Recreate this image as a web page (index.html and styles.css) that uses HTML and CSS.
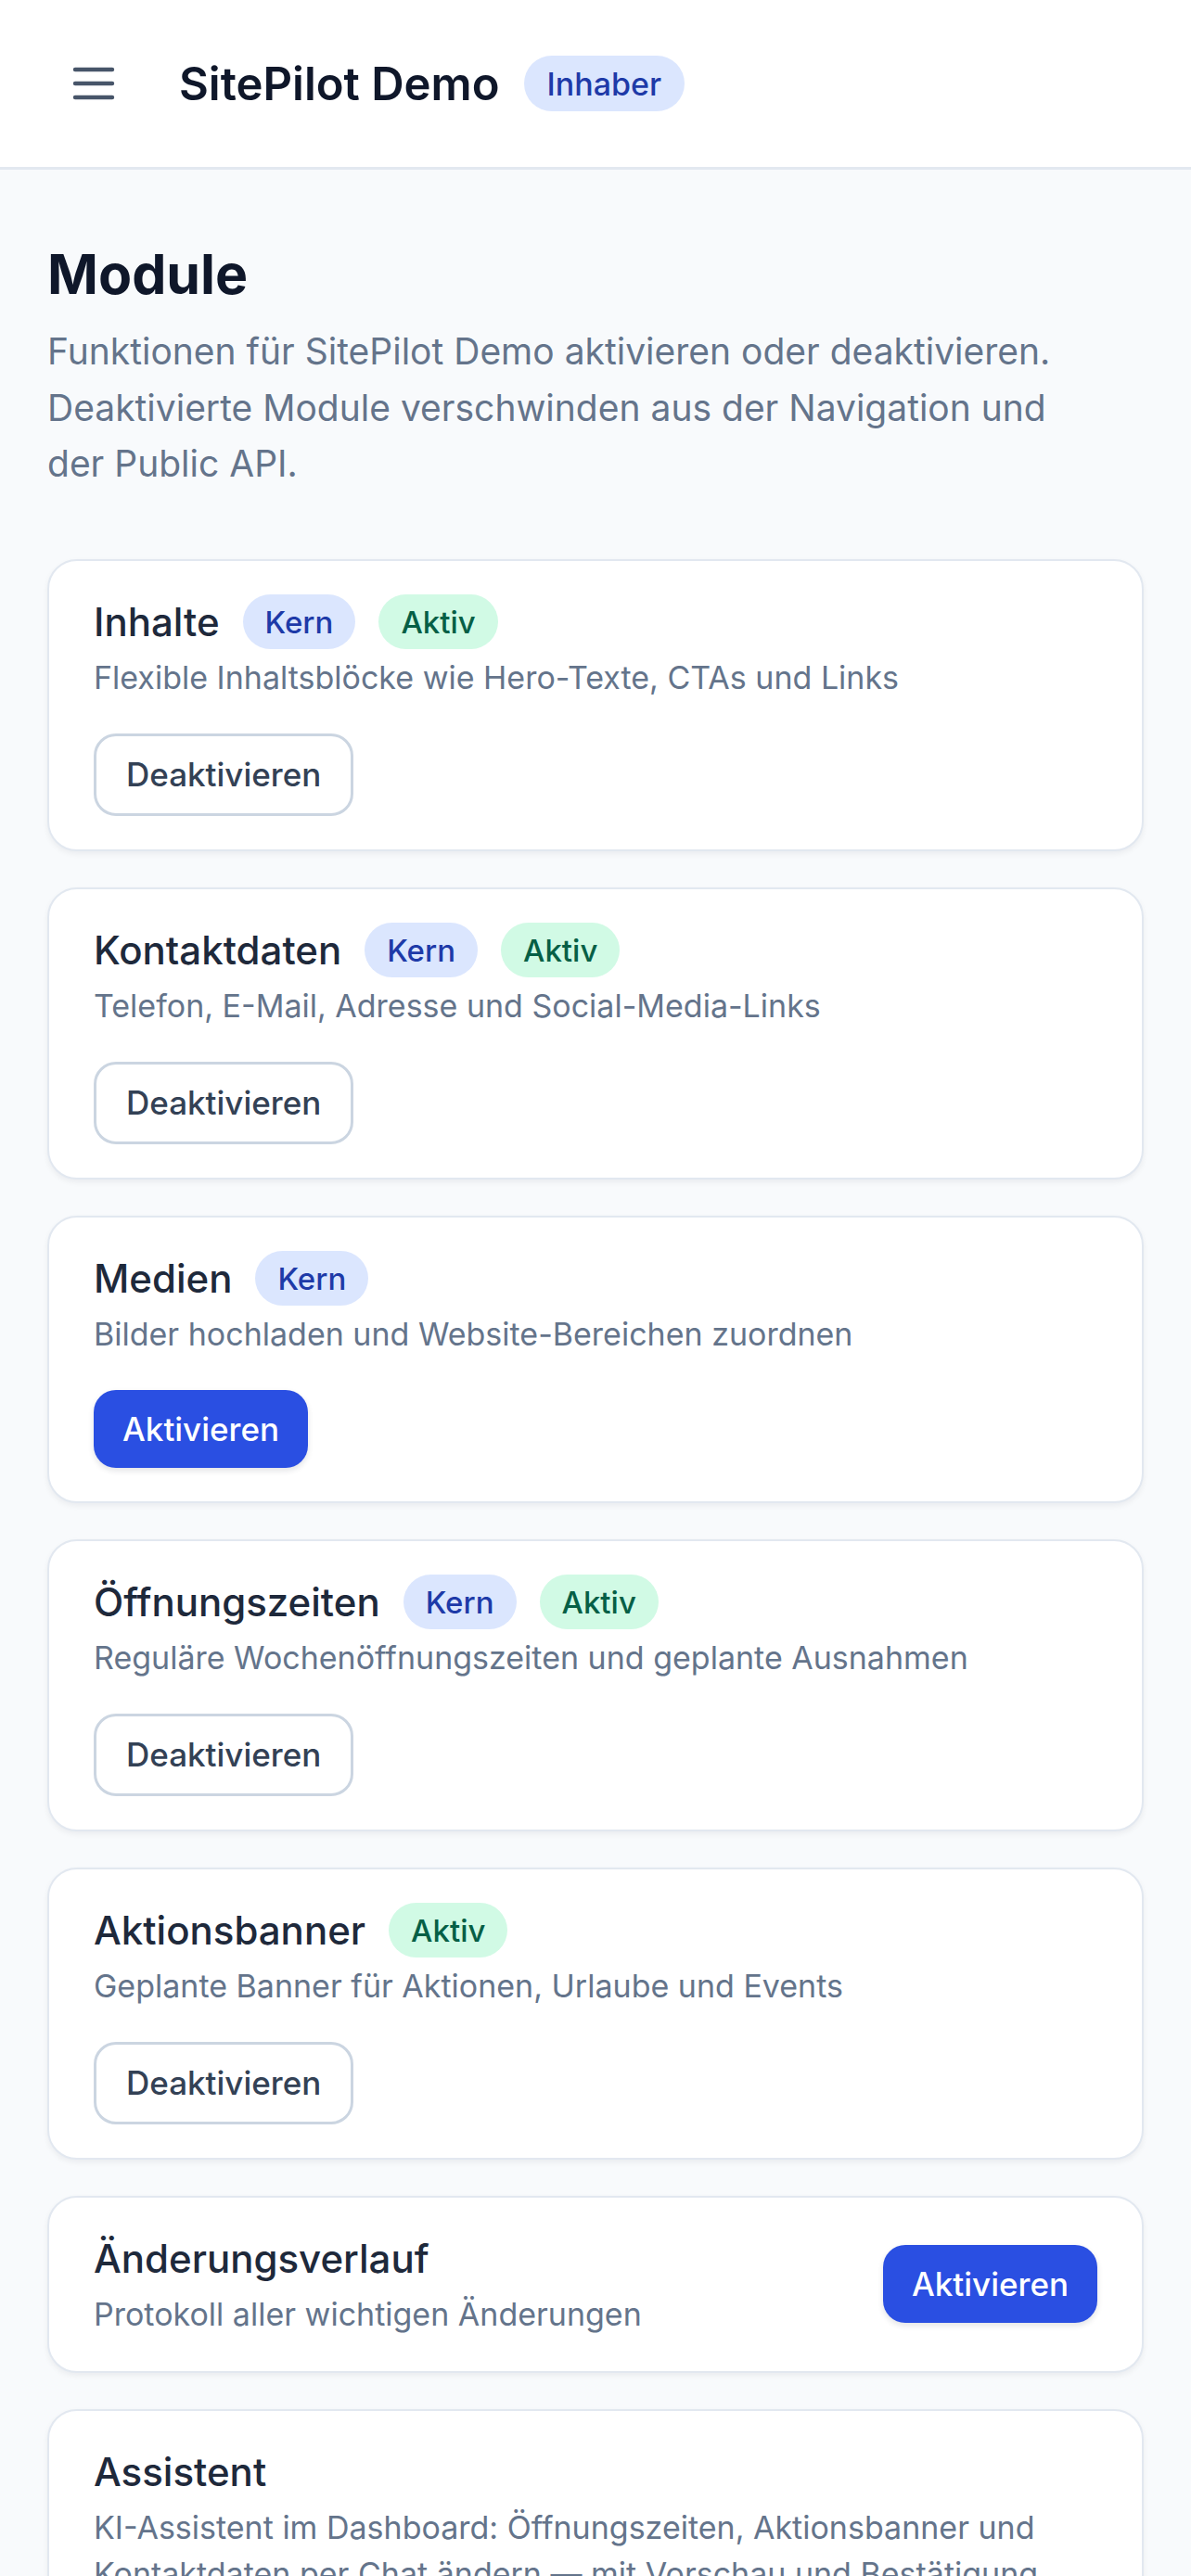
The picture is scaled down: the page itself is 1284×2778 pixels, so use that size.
FILE: index.html
```html
<!DOCTYPE html>
<html lang="de">
<head>
    <meta charset="UTF-8">
    <meta name="viewport" content="width=device-width, initial-scale=1.0">
    <title>Module – SitePilot Demo</title>
    <link rel="stylesheet" href="styles.css">
</head>
<body>
    <header class="topbar">
        <button class="menu-btn" aria-label="Menü">
            <svg viewBox="0 0 24 24" width="60" height="60" fill="none" stroke="currentColor" stroke-width="1.75" stroke-linecap="round">
                <line x1="4" y1="6" x2="20" y2="6"/>
                <line x1="4" y1="12" x2="20" y2="12"/>
                <line x1="4" y1="18" x2="20" y2="18"/>
            </svg>
        </button>
        <div class="site">
            <span class="site-name">SitePilot Demo</span>
            <span class="badge badge-blue">Inhaber</span>
        </div>
    </header>

    <main class="page">
        <h1>Module</h1>
        <p class="intro">Funktionen für SitePilot Demo aktivieren oder deaktivieren. Deaktivierte Module verschwinden aus der Navigation und<br>der Public API.</p>

        <div class="module-list">
            <div class="module">
                <div class="module-head">
                    <span class="module-title">Inhalte</span>
                    <span class="badge badge-blue">Kern</span>
                    <span class="badge badge-green">Aktiv</span>
                </div>
                <p class="module-desc">Flexible Inhaltsblöcke wie Hero-Texte, CTAs und Links</p>
                <div class="module-actions">
                    <button class="btn btn-outline">Deaktivieren</button>
                </div>
            </div>

            <div class="module">
                <div class="module-head">
                    <span class="module-title">Kontaktdaten</span>
                    <span class="badge badge-blue">Kern</span>
                    <span class="badge badge-green">Aktiv</span>
                </div>
                <p class="module-desc">Telefon, E-Mail, Adresse und Social-Media-Links</p>
                <div class="module-actions">
                    <button class="btn btn-outline">Deaktivieren</button>
                </div>
            </div>

            <div class="module">
                <div class="module-head">
                    <span class="module-title">Medien</span>
                    <span class="badge badge-blue">Kern</span>
                </div>
                <p class="module-desc">Bilder hochladen und Website-Bereichen zuordnen</p>
                <div class="module-actions">
                    <button class="btn btn-primary">Aktivieren</button>
                </div>
            </div>

            <div class="module">
                <div class="module-head">
                    <span class="module-title">Öffnungszeiten</span>
                    <span class="badge badge-blue">Kern</span>
                    <span class="badge badge-green">Aktiv</span>
                </div>
                <p class="module-desc">Reguläre Wochenöffnungszeiten und geplante Ausnahmen</p>
                <div class="module-actions">
                    <button class="btn btn-outline">Deaktivieren</button>
                </div>
            </div>

            <div class="module">
                <div class="module-head">
                    <span class="module-title">Aktionsbanner</span>
                    <span class="badge badge-green">Aktiv</span>
                </div>
                <p class="module-desc">Geplante Banner für Aktionen, Urlaube und Events</p>
                <div class="module-actions">
                    <button class="btn btn-outline">Deaktivieren</button>
                </div>
            </div>

            <div class="module module-inline">
                <div>
                    <div class="module-head">
                        <span class="module-title">Änderungsverlauf</span>
                    </div>
                    <p class="module-desc">Protokoll aller wichtigen Änderungen</p>
                </div>
                <button class="btn btn-primary">Aktivieren</button>
            </div>

            <div class="module">
                <div class="module-head">
                    <span class="module-title">Assistent</span>
                </div>
                <p class="module-desc">KI-Assistent im Dashboard: Öffnungszeiten, Aktionsbanner und Kontaktdaten per Chat ändern — mit Vorschau und Bestätigung.</p>
                <div class="module-actions">
                    <button class="btn btn-primary">Aktivieren</button>
                </div>
            </div>
        </div>
    </main>
</body>
</html>
```

FILE: styles.css
```css
* {
    box-sizing: border-box;
}
body {
    margin: 0;
    font-family: Inter, "Noto Sans", sans-serif;
    background-color: #f8fafc;
    color: #0f172a;
}
.topbar {
    height: 183px;
    background: #fff;
    border-bottom: 3px solid #e2e8f0;
    display: flex;
    align-items: center;
    padding-left: 71px;
    gap: 62px;
}
.menu-btn {
    background: none;
    border: none;
    padding: 0;
    color: #475569;
    display: flex;
    cursor: pointer;
}
.site {
    display: flex;
    align-items: center;
    gap: 26px;
}
.site-name {
    font-size: 49px;
    font-weight: 600;
    color: #0f172a;
}
.badge {
    display: inline-flex;
    align-items: center;
    height: 59px;
    padding: 0 24px;
    border-radius: 999px;
    font-size: 33px;
    font-weight: 500;
}
.topbar .badge {
    height: 60px;
    padding: 0 25px;
    font-size: 34px;
}
.badge-blue {
    background: #dbe6fe;
    color: #1e3aa8;
}
.badge-green {
    background: #d1fae5;
    color: #065f46;
}
.page {
    padding: 78px 51px 60px;
}
h1 {
    margin: 0;
    font-size: 59px;
    line-height: 70px;
    font-weight: 700;
    color: #0f172a;
}
.intro {
    margin: 18px 0 72px;
    font-size: 39px;
    line-height: 60.5px;
    color: #64748b;
}
.module-list {
    display: flex;
    flex-direction: column;
    gap: 39px;
}
.module {
    background: #fff;
    border: 2px solid #e2e8f0;
    border-radius: 32px;
    padding: 36px 48px 36px;
    box-shadow: 0 3px 6px rgba(15, 23, 42, 0.06);
}
.module-inline {
    display: flex;
    justify-content: space-between;
    align-items: center;
}
.module-head {
    display: flex;
    align-items: center;
    gap: 25px;
    min-height: 60px;
}
.module-title {
    font-size: 42px;
    line-height: 60px;
    font-weight: 500;
    color: #1e293b;
}
.module-desc {
    margin: 5px 0 0;
    font-size: 34px;
    line-height: 50px;
    color: #64748b;
}
.module-actions {
    margin-top: 35px;
    display: flex;
}
.btn {
    font-family: inherit;
    font-size: 35px;
    font-weight: 500;
    border-radius: 24px;
    cursor: pointer;
}
.btn-outline {
    height: 89px;
    padding: 0 32px;
    background: #fff;
    color: #334155;
    border: 3px solid #cbd5e1;
}
.btn-primary {
    height: 84px;
    padding: 0 31px;
    background: #2a4fe2;
    color: #fff;
    border: none;
    box-shadow: 0 3px 6px rgba(15, 23, 42, 0.12);
}
```
